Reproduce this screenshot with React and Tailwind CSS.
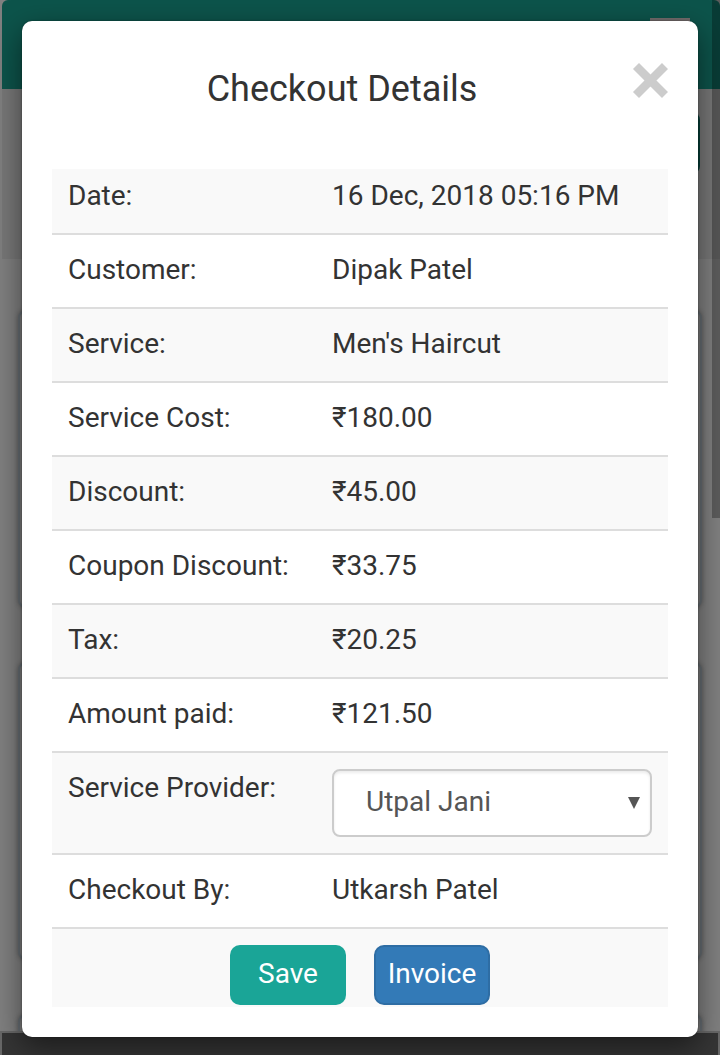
import React from 'react';

const details = [
  ['Date:', '16 Dec, 2018 05:16 PM'],
  ['Customer:', 'Dipak Patel'],
  ['Service:', "Men's Haircut"],
  ['Service Cost:', '₹180.00'],
  ['Discount:', '₹45.00'],
  ['Coupon Discount:', '₹33.75'],
  ['Tax:', '₹20.25'],
  ['Amount paid:', '₹121.50'],
];

const rowClass = 'border-t-2 border-[#dddddd] align-top odd:bg-[#f9f9f9] first:border-t-0';
const cellClass = 'px-4 pt-4 pb-[18px] text-left font-normal group-first:pt-2';

function Row({ label, children }) {
  return (
    <tr className={`group ${rowClass}`}>
      <th scope="row" className={`w-3/7 ${cellClass}`}>{label}</th>
      <td className={cellClass}>{children}</td>
    </tr>
  );
}

function BackgroundCard() {
  return (
    <div className="h-[298px] shrink-0 rounded-lg border-2 border-[#666d73] bg-[#7b7b7b] shadow-[0_0_5px_rgba(0,0,0,0.3)]" />
  );
}

function Backdrop() {
  return (
    <div aria-hidden="true" className="absolute inset-0 flex flex-col overflow-hidden bg-[#808080]">
      <div className="ml-0.5 flex h-[89px] shrink-0 justify-end rounded-t-md bg-[#0d544b] pt-[18px] pr-[30px]">
        <div className="h-1 w-10 bg-[#746d6d]" />
      </div>
      <div className="ml-0.5 flex h-[170px] shrink-0 justify-end bg-[#787878] pt-[23px] pr-5">
        <div className="h-[62px] w-24 rounded-lg bg-[#063f39]" />
      </div>
      <div className="flex min-h-0 flex-1 flex-col gap-[54px] overflow-hidden px-[18px] pt-[51px]">
        <BackgroundCard />
        <BackgroundCard />
        <BackgroundCard />
      </div>
      <div className="shrink-0 bg-[#686868] px-0.5 pt-0.5">
        <div className="h-[22px] bg-[#353535]" />
      </div>
      <div className="absolute top-0 right-0 h-[518px] w-2 bg-black/28" />
    </div>
  );
}

export default function App() {
  return (
    <div className="relative min-h-screen px-[22px] pt-[21px] pb-[18px] font-['Roboto',sans-serif] text-[28px] leading-[38px] text-[#333333]">
      <Backdrop />
      <section
        role="dialog"
        aria-modal="true"
        aria-labelledby="checkout-title"
        className="relative rounded-[10px] bg-white px-[30px] pb-[30px] shadow-[0_0_2px_rgba(0,0,0,0.4),0_10px_30px_rgba(0,0,0,0.5)]"
      >
        <header className="flex h-[148px] items-start">
          <h1 id="checkout-title" className="flex-1 pt-[46px] text-center text-[36px] leading-[44px] font-normal">
            Checkout Details
          </h1>
          <button type="button" aria-label="Close" className="mt-[42px] text-[#cccccc]">
            <svg viewBox="0 0 36 36" className="size-9" fill="none" stroke="currentColor" strokeWidth="8.5">
              <path d="M4 3 33 32M33 3 4 32" />
            </svg>
          </button>
        </header>
        <form onSubmit={(e) => e.preventDefault()}>
          <table className="w-full table-fixed border-collapse">
            <tbody>
              {details.map(([label, value]) => (
                <Row key={label} label={label}>{value}</Row>
              ))}
              <tr className={rowClass}>
                <th scope="row" className={cellClass}>
                  <label htmlFor="provider">Service Provider:</label>
                </th>
                <td className="p-4">
                  <div className="relative">
                    <select
                      id="provider"
                      defaultValue="Utpal Jani"
                      className="block h-[68px] w-full appearance-none rounded-lg border-2 border-[#cccccc] bg-white px-8 pb-0.5 text-[#555555] shadow-[inset_0_2px_3px_rgba(0,0,0,0.08)]"
                    >
                      <option>Utpal Jani</option>
                      <option>Utkarsh Patel</option>
                    </select>
                    <svg viewBox="0 0 12 12" className="pointer-events-none absolute top-7 right-3 size-3 fill-[#555555]">
                      <path d="M0 0h12L6 12z" />
                    </svg>
                  </div>
                </td>
              </tr>
              <Row label="Checkout By:">Utkarsh Patel</Row>
              <tr className={rowClass}>
                <td colSpan={2} className="pt-4 pb-0.5">
                  <div className="flex justify-center gap-7">
                    <button type="submit" className="h-[60px] w-[116px] rounded-[10px] bg-[#1aa597] pb-0.5 text-white">
                      Save
                    </button>
                    <button type="button" className="h-[60px] w-[116px] rounded-[10px] border-2 border-[#2e6da4] bg-[#337ab7] pb-0.5 text-white">
                      Invoice
                    </button>
                  </div>
                </td>
              </tr>
            </tbody>
          </table>
        </form>
      </section>
    </div>
  );
}
